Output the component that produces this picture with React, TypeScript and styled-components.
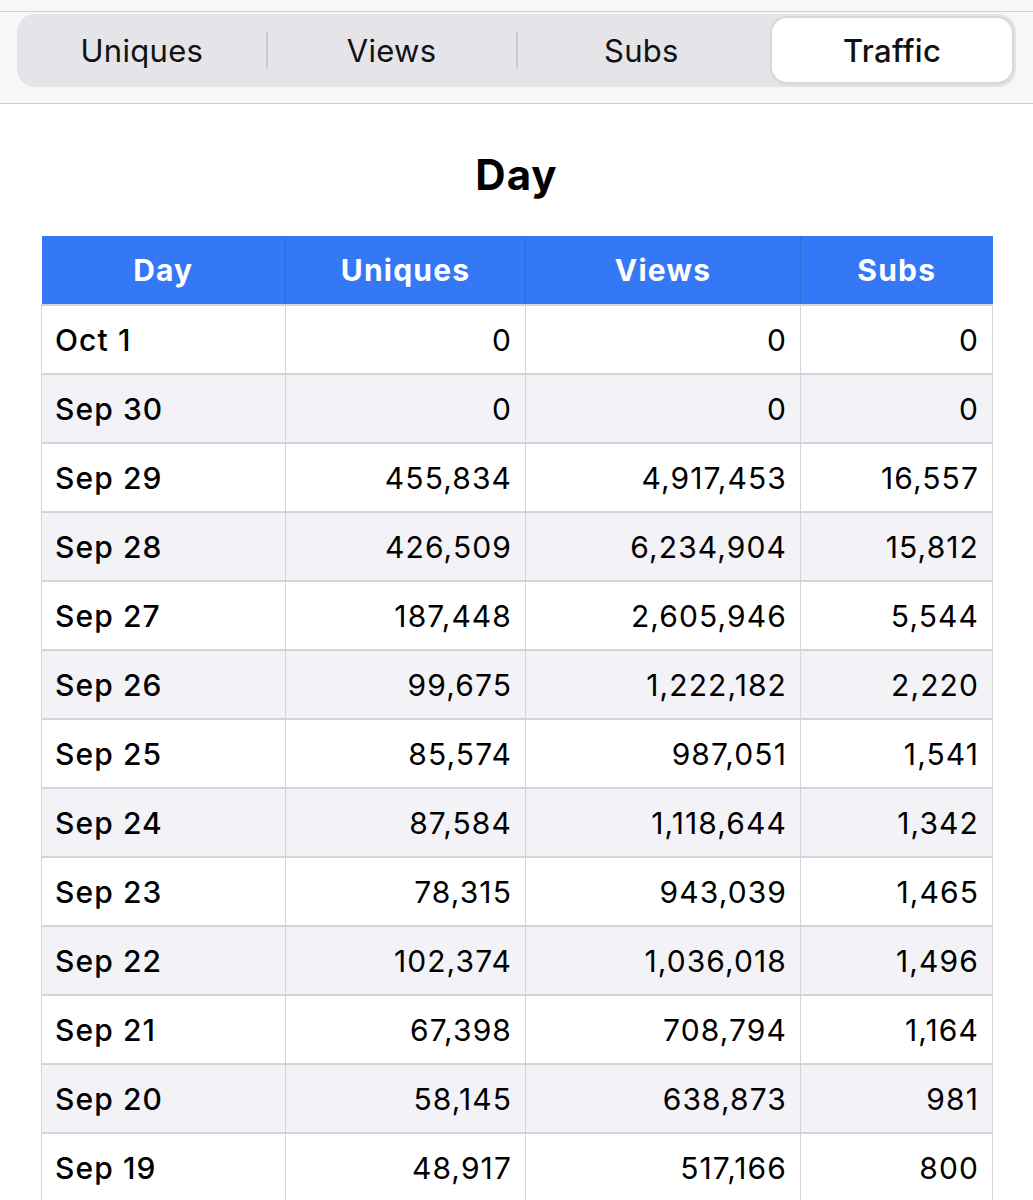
import React from "react";
import styled, { createGlobalStyle } from "styled-components";

const Global = createGlobalStyle`
  html, body { margin: 0; padding: 0; background: #ffffff; }
  body { font-family: Inter, "Noto Sans", "Liberation Sans", sans-serif; color: #000; }
`;

const Page = styled.div`
  width: 1033px;
  height: 1200px;
  overflow: hidden;
  background: #fff;
`;

const TopBar = styled.div`
  background: #f7f7f7;
  height: 104px;
  box-sizing: border-box;
  border-bottom: 1px solid #cfcfd2;
  padding-top: 11px;
`;

const TopBarInner = styled.div`
  border-top: 1px solid #d2d2d5;
  padding: 2px 17px 0 17px;
`;

const Segmented = styled.div`
  display: grid;
  grid-template-columns: repeat(4, 1fr);
  height: 73px;
  background: #e4e4e9;
  border-radius: 18px;
  padding: 3px 0;
  box-sizing: border-box;
`;

const Segment = styled.div<{ $active?: boolean; $divider?: boolean }>`
  position: relative;
  display: flex;
  align-items: center;
  justify-content: center;
  font-size: 31px;
  letter-spacing: 0.3px;
  font-weight: ${(p) => (p.$active ? 500 : 400)};
  color: #111;
  border-radius: 15px;
  background: ${(p) => (p.$active ? "#ffffff" : "transparent")};
  box-shadow: ${(p) =>
    p.$active ? "0 0 0 2px #d8d8dc, 0 2px 4px rgba(0,0,0,0.08)" : "none"};
  margin: ${(p) => (p.$active ? "1px 4px 2px 6px" : "0")};
  &::after {
    content: "";
    display: ${(p) => (p.$divider ? "block" : "none")};
    position: absolute;
    right: -1px;
    top: 15px;
    bottom: 15px;
    width: 2px;
    background: #cbcbcf;
  }
`;

const Title = styled.h1`
  margin: 0;
  padding-top: 47px;
  height: 132px;
  box-sizing: border-box;
  text-align: center;
  font-size: 42px;
  letter-spacing: 1px;
  font-weight: 700;
  line-height: 48px;
`;

const Table = styled.table`
  margin-left: 41px;
  width: 951px;
  border-collapse: collapse;
  table-layout: fixed;
`;

const HeadCell = styled.th`
  background: #3478f6;
  color: #fff;
  font-size: 30px;
  letter-spacing: 1.2px;
  font-weight: 700;
  height: 68px;
  padding: 0;
  text-align: center;
  border-left: 1px solid #2d6ad8;
  &:first-child { border-left: none; }
`;

const Row = styled.tr<{ $alt: boolean }>`
  background: ${(p) => (p.$alt ? "#f2f2f7" : "#ffffff")};
`;

const Cell = styled.td<{ $num?: boolean }>`
  height: 69px;
  box-sizing: border-box;
  font-size: 30px;
  letter-spacing: 1.1px;
  font-weight: ${(p) => (p.$num ? 400 : 500)};
  text-align: ${(p) => (p.$num ? "right" : "left")};
  padding: 0 13px 0 13px;
  border: 1px solid #d4d4d8;
  border-top: 2px solid #d4d4d8;
  white-space: nowrap;
  color: #000;
`;

const tabs = ["Uniques", "Views", "Subs", "Traffic"];

const rows: [string, string, string, string][] = [
  ["Oct 1", "0", "0", "0"],
  ["Sep 30", "0", "0", "0"],
  ["Sep 29", "455,834", "4,917,453", "16,557"],
  ["Sep 28", "426,509", "6,234,904", "15,812"],
  ["Sep 27", "187,448", "2,605,946", "5,544"],
  ["Sep 26", "99,675", "1,222,182", "2,220"],
  ["Sep 25", "85,574", "987,051", "1,541"],
  ["Sep 24", "87,584", "1,118,644", "1,342"],
  ["Sep 23", "78,315", "943,039", "1,465"],
  ["Sep 22", "102,374", "1,036,018", "1,496"],
  ["Sep 21", "67,398", "708,794", "1,164"],
  ["Sep 20", "58,145", "638,873", "981"],
  ["Sep 19", "48,917", "517,166", "800"],
];

export default function App() {
  return (
    <Page>
      <Global />
      <TopBar>
        <TopBarInner>
          <Segmented>
            {tabs.map((t, i) => (
              <Segment key={t} $active={i === 3} $divider={i < 2}>
                {t}
              </Segment>
            ))}
          </Segmented>
        </TopBarInner>
      </TopBar>
      <Title>Day</Title>
      <Table>
        <colgroup>
          <col style={{ width: 244 }} />
          <col style={{ width: 240 }} />
          <col style={{ width: 275 }} />
          <col style={{ width: 192 }} />
        </colgroup>
        <thead>
          <tr>
            <HeadCell>Day</HeadCell>
            <HeadCell>Uniques</HeadCell>
            <HeadCell>Views</HeadCell>
            <HeadCell>Subs</HeadCell>
          </tr>
        </thead>
        <tbody>
          {rows.map((r, i) => (
            <Row key={r[0]} $alt={i % 2 === 1}>
              <Cell>{r[0]}</Cell>
              <Cell $num>{r[1]}</Cell>
              <Cell $num>{r[2]}</Cell>
              <Cell $num>{r[3]}</Cell>
            </Row>
          ))}
        </tbody>
      </Table>
    </Page>
  );
}
